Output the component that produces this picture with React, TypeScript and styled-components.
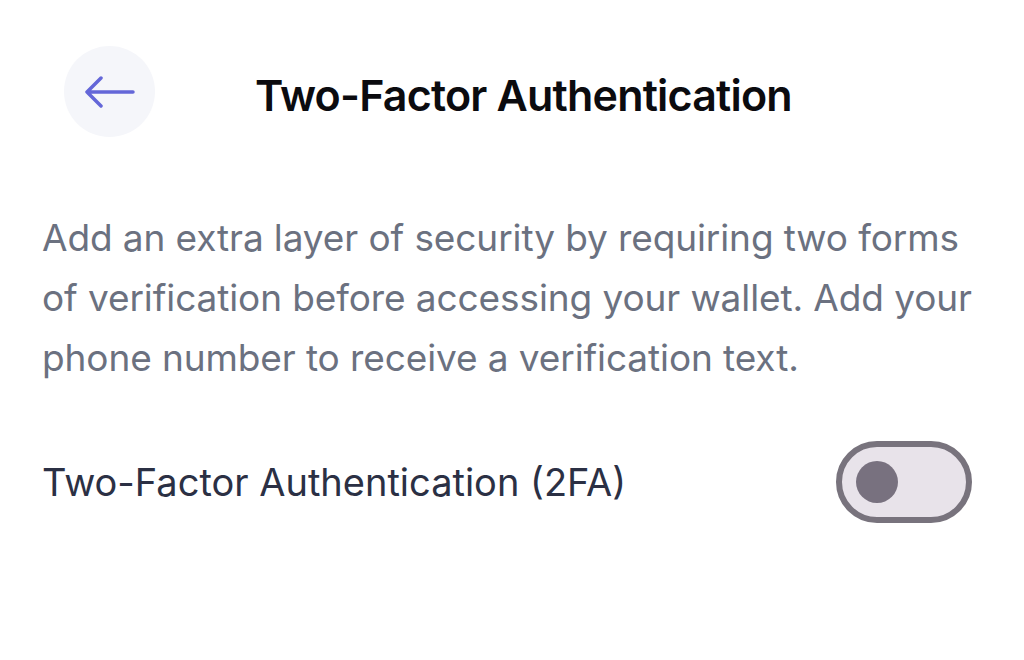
import styled, { createGlobalStyle } from 'styled-components'

const GlobalStyle = createGlobalStyle`
  html, body {
    margin: 0;
    padding: 0;
    background: #ffffff;
  }
  body {
    font-family: Inter, "Noto Sans", sans-serif;
    -webkit-font-smoothing: antialiased;
  }
`

const Screen = styled.div`
  width: 1024px;
  height: 660px;
  box-sizing: border-box;
  padding: 46px 42px 0 42px;
  background: #ffffff;
`

const Header = styled.div`
  display: flex;
  align-items: center;
  padding-left: 22px;
  gap: 100px;
`

const BackButton = styled.button`
  width: 91px;
  height: 91px;
  border-radius: 50%;
  border: none;
  padding: 0;
  background: #f5f6fa;
  display: flex;
  align-items: center;
  justify-content: center;
`

const Title = styled.h1`
  margin: 6px 0 0 0;
  font-size: 43px;
  font-weight: 600;
  color: #0b0b0f;
  letter-spacing: -0.8px;
`

const Description = styled.p`
  margin: 71px 0 0 0;
  font-size: 37px;
  line-height: 60px;
  color: #6b7180;
  font-weight: 400;
  letter-spacing: -0.1px;
`

const SettingRow = styled.div`
  display: flex;
  align-items: center;
  justify-content: space-between;
  margin-top: 53px;
  padding-right: 10px;
`

const SettingLabel = styled.span`
  font-size: 38px;
  color: #2b3044;
`

const Toggle = styled.div<{ on: boolean }>`
  width: 136px;
  height: 82px;
  box-sizing: border-box;
  border-radius: 41px;
  border: 6px solid #78737d;
  background: ${p => (p.on ? '#6366d6' : '#e8e3ea')};
  display: flex;
  align-items: center;
  justify-content: ${p => (p.on ? 'flex-end' : 'flex-start')};
  padding: 0 14px;
`

const Knob = styled.div`
  width: 42px;
  height: 42px;
  border-radius: 50%;
  background: #78717f;
`

const ArrowLeft = () => (
  <svg width="50" height="32" viewBox="0 0 50 32" fill="none">
    <path
      d="M48 16H2M2 16L16 2M2 16L16 30"
      stroke="#6467d8"
      strokeWidth="3.5"
      strokeLinecap="round"
      strokeLinejoin="round"
    />
  </svg>
)

export default function App() {
  return (
    <>
      <GlobalStyle />
      <Screen>
        <Header>
          <BackButton aria-label="Back">
            <ArrowLeft />
          </BackButton>
          <Title>Two-Factor Authentication</Title>
        </Header>
        <Description>
          Add an extra layer of security by requiring two forms of verification before
          accessing your wallet. Add your phone number to receive a verification text.
        </Description>
        <SettingRow>
          <SettingLabel>Two-Factor Authentication (2FA)</SettingLabel>
          <Toggle on={false}>
            <Knob />
          </Toggle>
        </SettingRow>
      </Screen>
    </>
  )
}
